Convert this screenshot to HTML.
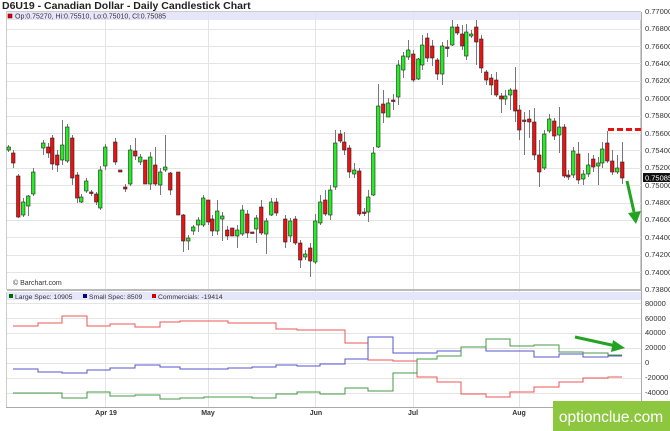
<!DOCTYPE html>
<html><head><meta charset="utf-8"><style>
html,body{margin:0;padding:0;background:#fff;width:670px;height:431px;overflow:hidden}
svg{display:block;font-family:"Liberation Sans",Arial,sans-serif}
</style></head><body>
<svg width="670" height="431" viewBox="0 0 670 431" xmlns="http://www.w3.org/2000/svg">
<rect width="670" height="431" fill="#fff"/>
<text x="2" y="9" font-size="10.5" font-weight="bold" fill="#222">D6U19 - Canadian Dollar - Daily Candlestick Chart</text>
<rect x="6.5" y="11.5" width="634" height="278" fill="#fff" stroke="#ccc"/>
<rect x="7" y="12" width="634" height="8" fill="#e6e6fa"/>
<g stroke="#e4e4e4" stroke-width="1">
<line x1="7" y1="29.5" x2="641" y2="29.5"/><line x1="7" y1="46.5" x2="641" y2="46.5"/><line x1="7" y1="63.5" x2="641" y2="63.5"/><line x1="7" y1="81.5" x2="641" y2="81.5"/><line x1="7" y1="98.5" x2="641" y2="98.5"/><line x1="7" y1="116.5" x2="641" y2="116.5"/><line x1="7" y1="133.5" x2="641" y2="133.5"/><line x1="7" y1="150.5" x2="641" y2="150.5"/><line x1="7" y1="168.5" x2="641" y2="168.5"/><line x1="7" y1="185.5" x2="641" y2="185.5"/><line x1="7" y1="203.5" x2="641" y2="203.5"/><line x1="7" y1="220.5" x2="641" y2="220.5"/><line x1="7" y1="237.5" x2="641" y2="237.5"/><line x1="7" y1="255.5" x2="641" y2="255.5"/><line x1="7" y1="272.5" x2="641" y2="272.5"/>
<line x1="105.5" y1="12" x2="105.5" y2="407"/><line x1="208.5" y1="12" x2="208.5" y2="407"/><line x1="315.5" y1="12" x2="315.5" y2="407"/><line x1="413.5" y1="12" x2="413.5" y2="407"/><line x1="519.5" y1="12" x2="519.5" y2="407"/>
</g>
<rect x="8" y="14" width="4" height="4" fill="#d00" stroke="#600" stroke-width=".5"/>
<text x="15" y="18.5" font-size="7" fill="#333">Op:0.75270, Hi:0.75510, Lo:0.75010, Cl:0.75085</text>
<text x="13" y="285" font-size="7" fill="#333">© Barchart.com</text>
<g stroke="#777" stroke-width="1">
<line x1="8.5" y1="145" x2="8.5" y2="152"/><line x1="13.5" y1="150" x2="13.5" y2="168"/><line x1="18.5" y1="174" x2="18.5" y2="218"/><line x1="23.5" y1="198" x2="23.5" y2="217"/><line x1="28.5" y1="195" x2="28.5" y2="216"/><line x1="33.5" y1="168" x2="33.5" y2="196"/><line x1="43.5" y1="140" x2="43.5" y2="155"/><line x1="48.5" y1="143" x2="48.5" y2="158"/><line x1="52.5" y1="135" x2="52.5" y2="170"/><line x1="57.5" y1="150" x2="57.5" y2="172"/><line x1="62.5" y1="120" x2="62.5" y2="165"/><line x1="67.5" y1="124" x2="67.5" y2="163"/><line x1="72.5" y1="135" x2="72.5" y2="185"/><line x1="77.5" y1="172" x2="77.5" y2="203"/><line x1="81.5" y1="194" x2="81.5" y2="203"/><line x1="86.5" y1="178" x2="86.5" y2="193"/><line x1="91.5" y1="190" x2="91.5" y2="196"/><line x1="96.5" y1="192" x2="96.5" y2="205"/><line x1="100.5" y1="166" x2="100.5" y2="210"/><line x1="105.5" y1="144" x2="105.5" y2="170"/><line x1="115.5" y1="138" x2="115.5" y2="165"/><line x1="125.5" y1="184" x2="125.5" y2="192"/><line x1="130.5" y1="145" x2="130.5" y2="186"/><line x1="135.5" y1="138" x2="135.5" y2="160"/><line x1="140.5" y1="154" x2="140.5" y2="165"/><line x1="150.5" y1="152" x2="150.5" y2="190"/><line x1="155.5" y1="147" x2="155.5" y2="186"/><line x1="160.5" y1="168" x2="160.5" y2="195"/><line x1="165.5" y1="135" x2="165.5" y2="172"/><line x1="170.5" y1="172" x2="170.5" y2="195"/><line x1="183.5" y1="214" x2="183.5" y2="252"/><line x1="188.5" y1="235" x2="188.5" y2="250"/><line x1="193.5" y1="225" x2="193.5" y2="235"/><line x1="198.5" y1="217" x2="198.5" y2="232"/><line x1="203.5" y1="195" x2="203.5" y2="227"/><line x1="208.5" y1="200" x2="208.5" y2="225"/><line x1="212.5" y1="215" x2="212.5" y2="236"/><line x1="217.5" y1="200" x2="217.5" y2="235"/><line x1="222.5" y1="212" x2="222.5" y2="241"/><line x1="227.5" y1="226" x2="227.5" y2="240"/><line x1="237.5" y1="225" x2="237.5" y2="248"/><line x1="242.5" y1="205" x2="242.5" y2="236"/><line x1="247.5" y1="210" x2="247.5" y2="238"/><line x1="256.5" y1="215" x2="256.5" y2="243"/><line x1="261.5" y1="200" x2="261.5" y2="235"/><line x1="266.5" y1="218" x2="266.5" y2="254"/><line x1="271.5" y1="198" x2="271.5" y2="216"/><line x1="276.5" y1="198" x2="276.5" y2="216"/><line x1="285.5" y1="215" x2="285.5" y2="248"/><line x1="290.5" y1="218" x2="290.5" y2="242"/><line x1="295.5" y1="216" x2="295.5" y2="245"/><line x1="300.5" y1="240" x2="300.5" y2="268"/><line x1="305.5" y1="250" x2="305.5" y2="260"/><line x1="310.5" y1="243" x2="310.5" y2="277"/><line x1="315.5" y1="214" x2="315.5" y2="264"/><line x1="320.5" y1="195" x2="320.5" y2="225"/><line x1="325.5" y1="190" x2="325.5" y2="216"/><line x1="330.5" y1="185" x2="330.5" y2="220"/><line x1="335.5" y1="130" x2="335.5" y2="190"/><line x1="340.5" y1="130" x2="340.5" y2="143"/><line x1="344.5" y1="132" x2="344.5" y2="155"/><line x1="349.5" y1="145" x2="349.5" y2="178"/><line x1="354.5" y1="163" x2="354.5" y2="178"/><line x1="359.5" y1="168" x2="359.5" y2="216"/><line x1="364.5" y1="208" x2="364.5" y2="216"/><line x1="368.5" y1="190" x2="368.5" y2="222"/><line x1="373.5" y1="147" x2="373.5" y2="196"/><line x1="378.5" y1="84" x2="378.5" y2="148"/><line x1="383.5" y1="90" x2="383.5" y2="123"/><line x1="388.5" y1="98" x2="388.5" y2="117"/><line x1="393.5" y1="94" x2="393.5" y2="110"/><line x1="398.5" y1="60" x2="398.5" y2="105"/><line x1="403.5" y1="52" x2="403.5" y2="78"/><line x1="408.5" y1="40" x2="408.5" y2="60"/><line x1="413.5" y1="50" x2="413.5" y2="82"/><line x1="418.5" y1="58" x2="418.5" y2="80"/><line x1="422.5" y1="35" x2="422.5" y2="70"/><line x1="427.5" y1="33" x2="427.5" y2="62"/><line x1="432.5" y1="40" x2="432.5" y2="66"/><line x1="437.5" y1="58" x2="437.5" y2="80"/><line x1="442.5" y1="42" x2="442.5" y2="85"/><line x1="447.5" y1="40" x2="447.5" y2="57"/><line x1="452.5" y1="20" x2="452.5" y2="46"/><line x1="457.5" y1="24" x2="457.5" y2="35"/><line x1="462.5" y1="25" x2="462.5" y2="50"/><line x1="466.5" y1="24" x2="466.5" y2="60"/><line x1="471.5" y1="30" x2="471.5" y2="38"/><line x1="476.5" y1="20" x2="476.5" y2="65"/><line x1="481.5" y1="35" x2="481.5" y2="73"/><line x1="486.5" y1="70" x2="486.5" y2="85"/><line x1="491.5" y1="74" x2="491.5" y2="95"/><line x1="496.5" y1="72" x2="496.5" y2="97"/><line x1="501.5" y1="93" x2="501.5" y2="113"/><line x1="505.5" y1="90" x2="505.5" y2="105"/><line x1="510.5" y1="88" x2="510.5" y2="110"/><line x1="515.5" y1="67" x2="515.5" y2="122"/><line x1="519.5" y1="105" x2="519.5" y2="140"/><line x1="524.5" y1="112" x2="524.5" y2="155"/><line x1="529.5" y1="110" x2="529.5" y2="138"/><line x1="534.5" y1="108" x2="534.5" y2="160"/><line x1="539.5" y1="140" x2="539.5" y2="187"/><line x1="544.5" y1="130" x2="544.5" y2="170"/><line x1="549.5" y1="114" x2="549.5" y2="133"/><line x1="554.5" y1="118" x2="554.5" y2="140"/><line x1="559.5" y1="107" x2="559.5" y2="153"/><line x1="564.5" y1="124" x2="564.5" y2="178"/><line x1="568.5" y1="170" x2="568.5" y2="180"/><line x1="573.5" y1="147" x2="573.5" y2="178"/><line x1="578.5" y1="142" x2="578.5" y2="184"/><line x1="583.5" y1="170" x2="583.5" y2="185"/><line x1="588.5" y1="153" x2="588.5" y2="177"/><line x1="593.5" y1="155" x2="593.5" y2="172"/><line x1="598.5" y1="157" x2="598.5" y2="185"/><line x1="602.5" y1="142" x2="602.5" y2="168"/><line x1="607.5" y1="131" x2="607.5" y2="163"/><line x1="612.5" y1="150" x2="612.5" y2="175"/><line x1="617.5" y1="155" x2="617.5" y2="174"/><line x1="622.5" y1="142" x2="622.5" y2="184"/>
</g>
<g stroke="#222" stroke-width=".6">
<g fill="#22ee22">
<rect x="7" y="147" width="3.5" height="3"/><rect x="21.5" y="202" width="3.5" height="13"/><rect x="26.5" y="196" width="3.5" height="10"/><rect x="31.5" y="172" width="3.5" height="22"/><rect x="41.5" y="143" width="3.5" height="5"/><rect x="60.5" y="145" width="3.5" height="15"/><rect x="65.5" y="127" width="3.5" height="34"/><rect x="79.5" y="197" width="3.5" height="5"/><rect x="84.5" y="181" width="3.5" height="10"/><rect x="98.5" y="170" width="3.5" height="38"/><rect x="103.5" y="147" width="3.5" height="19"/><rect x="128.5" y="150" width="3.5" height="34"/><rect x="138.5" y="157" width="3.5" height="5"/><rect x="148.5" y="157" width="3.5" height="27"/><rect x="158.5" y="172" width="3.5" height="13"/><rect x="163.5" y="167" width="3.5" height="3"/><rect x="186.5" y="238" width="3.5" height="3"/><rect x="191.5" y="227" width="3.5" height="4"/><rect x="196.5" y="220" width="3.5" height="5"/><rect x="201.5" y="198" width="3.5" height="27"/><rect x="215.5" y="211" width="3.5" height="20"/><rect x="220.5" y="216" width="3.5" height="3"/><rect x="235.5" y="230" width="3.5" height="6"/><rect x="240.5" y="210" width="3.5" height="24"/><rect x="254.5" y="218" width="3.5" height="11"/><rect x="264.5" y="221" width="3.5" height="13"/><rect x="269.5" y="202" width="3.5" height="13"/><rect x="288.5" y="221" width="3.5" height="15"/><rect x="303.5" y="254" width="3.5" height="3"/><rect x="313.5" y="221" width="3.5" height="41"/><rect x="318.5" y="202" width="3.5" height="21"/><rect x="328.5" y="190" width="3.5" height="25"/><rect x="333.5" y="143" width="3.5" height="44"/><rect x="352.5" y="170" width="3.5" height="4"/><rect x="366.5" y="197" width="3.5" height="15"/><rect x="371.5" y="153" width="3.5" height="42"/><rect x="376.5" y="106" width="3.5" height="41"/><rect x="386.5" y="103" width="3.5" height="14"/><rect x="396.5" y="65" width="3.5" height="32"/><rect x="401.5" y="56" width="3.5" height="14"/><rect x="406.5" y="50" width="3.5" height="7"/><rect x="416.5" y="59" width="3.5" height="20"/><rect x="420.5" y="45" width="3.5" height="20"/><rect x="440.5" y="46" width="3.5" height="28"/><rect x="450.5" y="27" width="3.5" height="18"/><rect x="464.5" y="32" width="3.5" height="24"/><rect x="469.5" y="34" width="3.5" height="2"/><rect x="503.5" y="96" width="3.5" height="3"/><rect x="508.5" y="90" width="3.5" height="5"/><rect x="542.5" y="134" width="3.5" height="34"/><rect x="547.5" y="119" width="3.5" height="12"/><rect x="557.5" y="127" width="3.5" height="8"/><rect x="571.5" y="151" width="3.5" height="24"/><rect x="581.5" y="174" width="3.5" height="5"/><rect x="586.5" y="165" width="3.5" height="9"/><rect x="596.5" y="163" width="3.5" height="3"/><rect x="600.5" y="149" width="3.5" height="14"/><rect x="615.5" y="168" width="3.5" height="4"/>
</g>
<g fill="#ee1111">
<rect x="11.5" y="153" width="3.5" height="10"/><rect x="16.5" y="176" width="3.5" height="41"/><rect x="46.5" y="147" width="3.5" height="6"/><rect x="50.5" y="138" width="3.5" height="26"/><rect x="55.5" y="155" width="3.5" height="10"/><rect x="70.5" y="138" width="3.5" height="40"/><rect x="75.5" y="175" width="3.5" height="23"/><rect x="89.5" y="192" width="3.5" height="1.5"/><rect x="94.5" y="194" width="3.5" height="8"/><rect x="113.5" y="142" width="3.5" height="20"/><rect x="118.5" y="170" width="3.5" height="2"/><rect x="123.5" y="187" width="3.5" height="2"/><rect x="133.5" y="151" width="3.5" height="5"/><rect x="143.5" y="160" width="3.5" height="24"/><rect x="153.5" y="165" width="3.5" height="19"/><rect x="168.5" y="173" width="3.5" height="17"/><rect x="176.5" y="172" width="3.5" height="43"/><rect x="181.5" y="215" width="3.5" height="26"/><rect x="206.5" y="200" width="3.5" height="22"/><rect x="210.5" y="219" width="3.5" height="12"/><rect x="225.5" y="230" width="3.5" height="6"/><rect x="230.5" y="228" width="3.5" height="8"/><rect x="245.5" y="214" width="3.5" height="19"/><rect x="250.5" y="232" width="3.5" height="1.5"/><rect x="259.5" y="207" width="3.5" height="26"/><rect x="274.5" y="202" width="3.5" height="11"/><rect x="283.5" y="219" width="3.5" height="23"/><rect x="293.5" y="219" width="3.5" height="24"/><rect x="298.5" y="243" width="3.5" height="17"/><rect x="308.5" y="248" width="3.5" height="13"/><rect x="323.5" y="200" width="3.5" height="14"/><rect x="338.5" y="134" width="3.5" height="7"/><rect x="342.5" y="142" width="3.5" height="8"/><rect x="347.5" y="148" width="3.5" height="24"/><rect x="357.5" y="171" width="3.5" height="43"/><rect x="362.5" y="212" width="3.5" height="1.5"/><rect x="381.5" y="104" width="3.5" height="9"/><rect x="391.5" y="100" width="3.5" height="1.5"/><rect x="411.5" y="54" width="3.5" height="26"/><rect x="425.5" y="38" width="3.5" height="20"/><rect x="430.5" y="46" width="3.5" height="12"/><rect x="435.5" y="60" width="3.5" height="14"/><rect x="445.5" y="47" width="3.5" height="1.5"/><rect x="455.5" y="27" width="3.5" height="6"/><rect x="460.5" y="34" width="3.5" height="12"/><rect x="474.5" y="27" width="3.5" height="15"/><rect x="479.5" y="39" width="3.5" height="29"/><rect x="484.5" y="72" width="3.5" height="8"/><rect x="489.5" y="78" width="3.5" height="7"/><rect x="494.5" y="80" width="3.5" height="15"/><rect x="499.5" y="96" width="3.5" height="3"/><rect x="513.5" y="90" width="3.5" height="21"/><rect x="517.5" y="110" width="3.5" height="20"/><rect x="522.5" y="120" width="3.5" height="1.5"/><rect x="527.5" y="119" width="3.5" height="3"/><rect x="532.5" y="122" width="3.5" height="33"/><rect x="537.5" y="155" width="3.5" height="17"/><rect x="552.5" y="121" width="3.5" height="15"/><rect x="562.5" y="127" width="3.5" height="49"/><rect x="566.5" y="175" width="3.5" height="2"/><rect x="576.5" y="154" width="3.5" height="26"/><rect x="591.5" y="159" width="3.5" height="8"/><rect x="605.5" y="143" width="3.5" height="18"/><rect x="610.5" y="161" width="3.5" height="11"/><rect x="620.5" y="162" width="3.5" height="16"/>
</g>
</g>
<line x1="608" y1="129.5" x2="641" y2="129.5" stroke="#ee1111" stroke-width="3" stroke-dasharray="6,3"/>
<line x1="627" y1="181" x2="634" y2="212" stroke="#22a322" stroke-width="3"/>
<polygon points="628,213 641,211 636,224" fill="#22a322"/>
<line x1="641.5" y1="12" x2="641.5" y2="407" stroke="#aaa"/>
<g font-size="7.5" fill="#333">
<text x="645" y="14">0.77000</text><text x="645" y="31">0.76800</text><text x="645" y="49">0.76600</text><text x="645" y="66">0.76400</text><text x="645" y="83">0.76200</text><text x="645" y="101">0.76000</text><text x="645" y="118">0.75800</text><text x="645" y="136">0.75600</text><text x="645" y="153">0.75400</text><text x="645" y="170">0.75200</text><text x="645" y="188">0.75000</text><text x="645" y="205">0.74800</text><text x="645" y="222">0.74600</text><text x="645" y="240">0.74400</text><text x="645" y="257">0.74200</text><text x="645" y="275">0.74000</text><text x="645" y="292">0.73800</text>
<text x="645" y="306">80000</text><text x="645" y="321">60000</text><text x="645" y="335">40000</text><text x="645" y="350">20000</text><text x="645" y="365">0</text><text x="645" y="380">-20000</text><text x="645" y="395">-40000</text>
</g>
<rect x="643" y="173" width="27" height="9" fill="#111"/>
<text x="645" y="180.5" font-size="7.5" fill="#fff">0.75085</text>
<rect x="7" y="289" width="634" height="2" fill="#bbb"/>
<rect x="7" y="292" width="634" height="8" fill="#e6e6fa"/>
<g stroke="#e4e4e4"><line x1="7" y1="303.5" x2="641" y2="303.5"/><line x1="7" y1="318.5" x2="641" y2="318.5"/><line x1="7" y1="333.5" x2="641" y2="333.5"/><line x1="7" y1="348.5" x2="641" y2="348.5"/><line x1="7" y1="363.5" x2="641" y2="363.5"/><line x1="7" y1="378.5" x2="641" y2="378.5"/><line x1="7" y1="393.5" x2="641" y2="393.5"/></g>
<line x1="6.5" y1="292" x2="6.5" y2="407" stroke="#ccc"/>
<line x1="6" y1="407.5" x2="641" y2="407.5" stroke="#aaa"/>
<rect x="9" y="294" width="4" height="4" fill="#060" />
<text x="15" y="299" font-size="6.8" fill="#333">Large Spec: 10905</text>
<rect x="83" y="294" width="4" height="4" fill="#008"/>
<text x="89" y="299" font-size="6.8" fill="#333">Small Spec: 8509</text>
<rect x="152" y="294" width="4" height="4" fill="#c00"/>
<text x="158" y="299" font-size="6.8" fill="#333">Commercials: -19414</text>
<g fill="none" stroke-width="1">
<polyline stroke="#ee5555" points="13,326 38,326 38,323 62,323 62,316 87,316 87,326 110,326 110,324 135,324 135,327 160,327 160,322 180,322 180,321 228,321 228,323 276,323 276,329 297,329 297,330 345,330 345,343 368,343 368,360 393,360 393,361 417,361 417,377 437,377 437,382 461,382 461,394 486,394 486,397 510,397 510,392 534,392 534,387 559,387 559,382 583,382 583,378 608,378 608,377 622,377"/>
<polyline stroke="#5555cc" points="13,369 38,369 38,372 62,372 62,373 87,373 87,370 110,370 110,368 135,368 135,365 160,365 160,367 180,367 180,369 228,369 228,368 252,368 252,367 276,367 276,365 297,365 297,366 320,366 320,364 345,364 345,359 368,359 368,337 393,337 393,353 437,353 437,351 461,351 461,347 486,347 486,351 534,351 534,357 559,357 559,354 583,354 583,357 608,357 608,356 622,356"/>
<polyline stroke="#449944" points="13,393 62,393 62,398 87,398 87,392 110,392 110,396 135,396 135,395 160,395 160,399 180,399 180,398 204,398 204,397 252,397 252,398 276,398 276,394 297,394 297,392 320,392 320,394 345,394 345,388 368,388 368,391 393,391 393,373 417,373 417,359 437,359 437,356 461,356 461,347 486,347 486,339 510,339 510,346 534,346 534,345 559,345 559,352 583,352 583,353 608,353 608,355 622,355"/>
</g>
<line x1="575" y1="337" x2="616" y2="346" stroke="#22a322" stroke-width="3"/>
<polygon points="613,340 625,348 611,352" fill="#22a322"/>
<g font-size="7" font-weight="bold" fill="#333" text-anchor="middle">
<text x="106" y="415">Apr 19</text><text x="208" y="415">May</text><text x="316" y="415">Jun</text><text x="413" y="415">Jul</text><text x="519" y="415">Aug</text>
</g>
<rect x="553" y="401" width="117" height="30" fill="#8dc63f"/>
<text x="611" y="422" font-size="15.5" fill="#fff" text-anchor="middle">optionclue.com</text>
</svg>
</body></html>
